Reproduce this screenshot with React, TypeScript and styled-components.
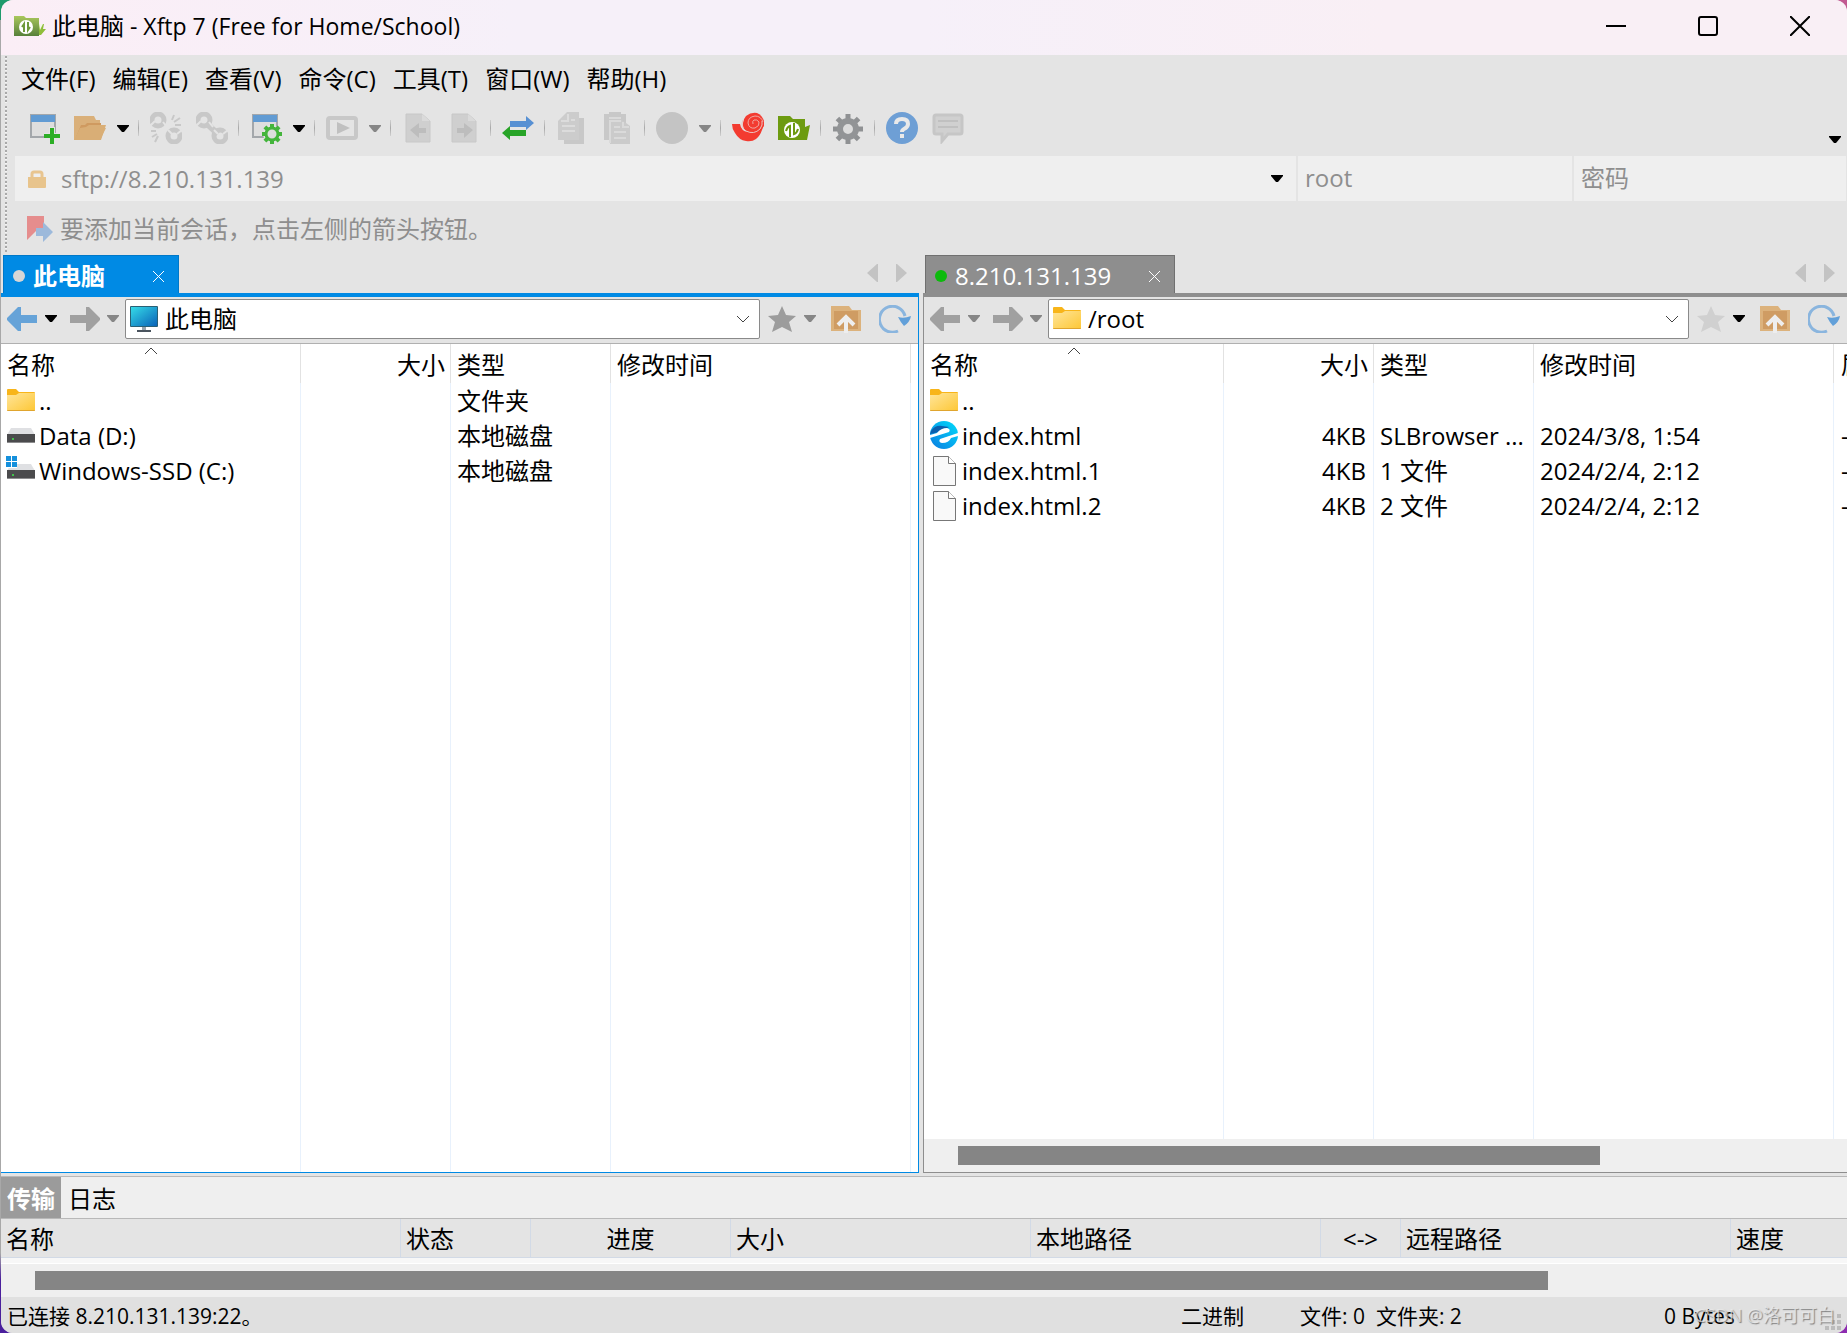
import React from "react";
import styled, { createGlobalStyle } from "styled-components";

const GlobalStyle = createGlobalStyle`
  *, *::before, *::after { box-sizing: border-box; }
  body { margin: 0; }
  body, button, input, select, table {
    font-family: "Open Sans", "Noto Sans CJK SC", sans-serif;
    font-size: 24px;
    line-height: 32px;
    font-weight: 400;
    color: #000;
  }
  button, input, select { margin: 0; padding: 0; border: 0; background: none; outline: none; border-radius: 0; }
  svg { display: block; flex: none; }
`;

/* ---------- Window frame ---------- */

const Desktop = styled.div`
  height: 100vh;
  padding-left: 1px;
  background: linear-gradient(90deg, transparent 50%, #c25a92 50%) top / 100% 20px no-repeat,
    linear-gradient(90deg, transparent 50%, #8d2bb0 50%) bottom / 100% 20px no-repeat,
    linear-gradient(#1f9a6c 0 20px, #a8a8a8 20px 94%, #4a1f9c 96%);
`;

const Frame = styled.div`
  height: 100%;
  display: flex;
  flex-direction: column;
  border-radius: 12px;
  overflow: hidden;
  background: #e4e4e4;
`;

const TitleBar = styled.header`
  flex: none;
  height: 55px;
  display: flex;
  align-items: center;
  padding-left: 13px;
  padding-bottom: 3px;
  background: linear-gradient(90deg, #fbeef6 0, #f6f0f9 28%, #f6f0f9 50%, #f9eff5 75%);
`;

const Title = styled.h1`
  flex: 1;
  margin: 0;
  padding-left: 6px;
  font-size: 24px;
  line-height: 32px;
  font-weight: 400;
`;

const AppName = styled.span`
  font-size: 23px;
`;

const CaptionButton = styled.button`
  width: 92px;
  height: 52px;
  padding-right: 2px;
  display: grid;
  place-items: center;
`;

/* ---------- Bars ---------- */

const Bar = styled.div<{ $height: number }>`
  flex: none;
  height: ${(p) => p.$height}px;
  display: flex;
  align-items: stretch;
`;

const Grip = styled.i`
  flex: none;
  width: 2px;
  margin: 1px 6px 1px 4px;
  background: repeating-linear-gradient(#a9a9a9 0 2px, #f4f4f4 2px 3px, #e4e4e4 3px 4px);
`;

const Menu = styled.nav`
  display: flex;
  align-items: center;
  padding-bottom: 2px;
`;

const MenuItem = styled.button`
  padding: 0 9px 0 8px;
`;

const Tools = styled.div`
  flex: 1;
  display: flex;
  align-items: center;
  padding: 0 6px 5px 8px;
`;

const ToolButton = styled.button`
  width: 46px;
  height: 40px;
  display: grid;
  place-items: center;
`;

const DropButton = styled.button`
  width: 22px;
  height: 40px;
  padding-left: 4px;
  display: flex;
  align-items: center;
`;

const Separator = styled.i`
  width: 8px;
  height: 16px;
  background: linear-gradient(#d0d0d0, #a8a8a8, #d0d0d0) 3px 0 / 1px 100% no-repeat;
`;

const Overflow = styled.button`
  margin: 22px 0 0 auto;
`;

const AddressFields = styled.div`
  flex: 1;
  display: grid;
  grid-template-columns: 1281fr 274fr 272fr;
  gap: 2px;
  margin: 0 1px 0 2px;
`;

const Field = styled.label`
  display: flex;
  align-items: center;
  min-width: 0;
  padding: 0 7px 1px;
  background: #efefef;
`;

const LockField = styled(Field)`
  padding: 0 13px 0;
  gap: 15px;
`;

const FieldInput = styled.input`
  flex: 1;
  min-width: 0;
  color: #8e8e8e;
  &::placeholder { color: #8e8e8e; opacity: 1; }
`;

const Hint = styled.div`
  display: flex;
  align-items: center;
  gap: 7px;
  padding-left: 14px;
  padding-top: 4px;
  color: #8e8e8e;
`;

/* ---------- Panes ---------- */

const Panes = styled.main`
  flex: 1;
  min-height: 0;
  display: grid;
  grid-template-columns: minmax(0, 918fr) minmax(0, 924fr);
  column-gap: 4px;
`;

const Pane = styled.section`
  display: flex;
  flex-direction: column;
  min-height: 0;
`;

const TabStrip = styled.div`
  flex: none;
  height: 40px;
  display: flex;
  align-items: flex-end;
  justify-content: space-between;
  padding: 0 12px 0 2px;
`;

const Tab = styled.div<{ $active: boolean; $width: number }>`
  width: ${(p) => p.$width}px;
  height: 38px;
  display: flex;
  align-items: center;
  padding: 3px 14px 0 9px;
  color: #fff;
  background: ${(p) => (p.$active ? "#008ae4" : "#8e8e8e")};
  border: 1px solid ${(p) => (p.$active ? "#0078c8" : "#707070")};
  border-bottom: 0;
`;

const Dot = styled.i<{ $color: string }>`
  width: 12px;
  height: 12px;
  border-radius: 50%;
  background: ${(p) => p.$color};
`;

const TabLabel = styled.button<{ $bold: boolean }>`
  flex: 1;
  padding-left: 8px;
  text-align: left;
  color: #fff;
  font-weight: ${(p) => (p.$bold ? 700 : 400)};
`;

const TabArrows = styled.div`
  display: flex;
  gap: 18px;
  padding-bottom: 11px;
  button { height: 18px; line-height: 0; }
`;

const PaneBody = styled.div<{ $active: boolean }>`
  flex: 1;
  min-height: 0;
  display: flex;
  flex-direction: column;
  border: solid ${(p) => (p.$active ? "#008ae4" : "#8e8e8e")};
  border-width: ${(p) => (p.$active ? "4px 1px 1px 0" : "4px 0 1px 1px")};
`;

const PathBar = styled.div`
  flex: none;
  height: 47px;
  display: flex;
  align-items: center;
  padding: 0 7px 3px 6px;
  border-bottom: 1px solid #b0b0b0;
`;

const NavButton = styled.button<{ $width: number }>`
  width: ${(p) => p.$width}px;
  height: 40px;
  display: flex;
  align-items: center;
`;

const Combo = styled.label`
  flex: 1;
  min-width: 0;
  height: 40px;
  display: flex;
  align-items: center;
  gap: 7px;
  margin-right: 8px;
  padding: 0 9px 0 4px;
  background: #fff;
  border: 1px solid #8a8a8a;
  border-radius: 2px;
`;

const ComboSelect = styled.select`
  flex: 1;
  min-width: 0;
  appearance: none;
`;

const ListArea = styled.div`
  flex: 1;
  min-height: 0;
  overflow: hidden;
  background: #fff;
`;

const FileTable = styled.table`
  width: 100%;
  height: 100%;
  table-layout: fixed;
  border-collapse: separate;
  border-spacing: 0;
  th, td {
    height: 35px;
    padding: 0 5px 0 6px;
    text-align: left;
    white-space: nowrap;
    overflow: hidden;
    font-weight: 400;
    border-right: 1px solid #e8f1fc;
  }
  th { position: relative; height: 39px; border-right-color: #e2e2e2; padding-top: 2px; }
  th:nth-child(2), td:nth-child(2) { text-align: right; }
  td:nth-child(2) { padding-right: 7px; }
  th:last-child, td:last-child { border-right: 0; padding-left: 7px; padding-right: 0; }
  tr:last-child td { height: auto; }
`;

const SortMark = styled.span`
  position: absolute;
  top: 3px;
  left: 50%;
  margin-left: -7px;
`;

const FileName = styled.span`
  display: flex;
  align-items: center;
  gap: 4px;
  height: 35px;
`;

const ScrollTrack = styled.div<{ $start: number; $thumb: number; $end: number }>`
  flex: none;
  height: 33px;
  padding: 7px 0;
  display: grid;
  grid-template-columns: ${(p) => `${p.$start}fr ${p.$thumb}fr ${p.$end}fr`};
  background: #efefef;
`;

const Thumb = styled.i`
  grid-column: 2;
  background: #858585;
`;

/* ---------- Transfer panel ---------- */

const Transfer = styled.section`
  flex: none;
  margin-top: 3px;
  border-top: 1px solid #b8b8b8;
`;

const TransferTabs = styled.div`
  height: 42px;
  display: flex;
  background: #efefef;
  border-bottom: 1px solid #b8b8b8;
`;

const TransferTab = styled.button<{ $active?: boolean }>`
  padding: 2px 6px 0;
  margin-right: 1px;
  ${(p) => p.$active && "background: #9b9b9b; color: #fff; font-weight: 700;"}
`;

const TransferTable = styled.table`
  width: 100%;
  table-layout: fixed;
  border-collapse: separate;
  border-spacing: 0;
  th {
    height: 39px;
    padding: 2px 5px 0;
    text-align: left;
    font-weight: 400;
    border-right: 1px solid #d2dae6;
    border-bottom: 1px solid #d2dae6;
  }
  th:last-child { border-right: 0; }
  th:nth-child(3), th:nth-child(6) { text-align: center; }
`;

const EmptyRows = styled.div`
  height: 6px;
  background: #f7f7f7;
  border-bottom: 1px solid #fff;
`;

const StatusBar = styled.footer`
  flex: none;
  position: relative;
  height: 36px;
  display: grid;
  grid-template-columns: 1fr 119px 364px 183px;
  align-items: center;
  padding-left: 6px;
  padding-top: 1px;
  background: #e0e0e0;
  font-size: 21px;
  line-height: 28px;
  white-space: pre;
`;

const Watermark = styled.span`
  position: absolute;
  right: 12px;
  top: 4px;
  font-size: 18px;
  line-height: 28px;
  color: rgba(238, 238, 238, 0.7);
  text-shadow: 1px 1px 1px rgba(90, 90, 90, 0.7);
`;

const SizeGrip = styled.svg`
  position: absolute;
  right: 6px;
  bottom: 3px;
`;

/* ---------- Icons ---------- */

const Drop = ({ dim = false }: { dim?: boolean }) => (
  <svg width="12" height="7" viewBox="0 0 12 7">
    <path d="M0 0h12v1L7 7H5L0 1z" fill={dim ? "#868686" : "#000"} />
  </svg>
);

const Tool = ({ children }: { children: React.ReactNode }) => (
  <svg width="32" height="32" viewBox="0 0 32 32">{children}</svg>
);

const Teeth = ({ cx, cy, r, w, h, fill }: { cx: number; cy: number; r: number; w: number; h: number; fill: string }) => (
  <g fill={fill}>
    {[0, 45, 90, 135, 180, 225, 270, 315].map((a) => (
      <rect key={a} x={cx - w / 2} y={cy - r} width={w} height={h} transform={`rotate(${a} ${cx} ${cy})`} />
    ))}
  </g>
);

const WindowShape = () => (
  <>
    <rect x="3" y="3" width="24" height="22" fill="#dedede" stroke="#a3a7ab" strokeWidth="2" />
    <rect x="3" y="3" width="24" height="7" fill="#619bd3" />
  </>
);

const NewSession = () => (
  <Tool>
    <WindowShape />
    <path d="M24 15v16M16 24h16" stroke="#e4e4e4" strokeWidth="6" />
    <path d="M24 16v16M16 24h16" stroke="#2cae25" strokeWidth="4" />
  </Tool>
);

const OpenFolder = () => (
  <Tool>
    <path d="M0 4h20l2 4h4v8h6l-6 12H0z" fill="#dab07a" />
    <path d="M2 25l5-12h4l2-2h14v4h-2" fill="#cf9a60" />
    <path d="M0 28l6-12 6-1 3-2h17l-5 15z" fill="#d9ae76" />
  </Tool>
);

const Chain = ({ broken = false }: { broken?: boolean }) => (
  <Tool>
    <g fill="none" stroke="#c8c8c8" strokeWidth="5">
      <circle cx="8" cy="8" r="6" />
      <circle cx="24" cy="24" r="6" />
      {broken ? (
        <path d="M22 8l2-5M24 10l6-4M25 13h6M8 24l-3 6M7 22l-5 3M6 19H1" strokeWidth="2" />
      ) : (
        <path d="M10 11l12 11" strokeWidth="6" />
      )}
    </g>
    <path d="M5 9l-5 5M13 10l4 5M18 18l4 4M27 22l5-4" stroke="#e4e4e4" strokeWidth="2" />
  </Tool>
);

const SessionSettings = () => (
  <Tool>
    <WindowShape />
    <circle cx="22" cy="22" r="9" fill="#e4e4e4" />
    <Teeth cx={22} cy={22} r={10} w={4} h={5} fill="#44b53c" />
    <circle cx="22" cy="22" r="6" fill="#dedede" stroke="#44b53c" strokeWidth="3" />
  </Tool>
);

const Play = () => (
  <Tool>
    <rect x="2" y="6" width="28" height="20" rx="2" fill="none" stroke="#c8c8c8" strokeWidth="4" />
    <path d="M11 10l13 6-13 6z" fill="#c0c0c0" />
  </Tool>
);

const DocArrow = ({ left = false }: { left?: boolean }) => (
  <Tool>
    <path d="M4 2h16l8 7v21H4z" fill="#cfcfcf" stroke="#c8c8c8" />
    <path d="M20 2v7h8" fill="#dadada" />
    <path d={left ? "M8 18l9-7v5h7v5h-7v5z" : "M25 18l-9-7v5H9v5h7v5z"} fill="#bdbdbd" />
  </Tool>
);

const Swap = () => (
  <Tool>
    <path d="M8 9h16V4l8 7-8 7v-3H8z" fill="#5790d3" />
    <path d="M24 18H8v-4l-8 7 8 7v-4h16z" fill="#28a428" />
  </Tool>
);

const CopyIcon = () => (
  <Tool>
    <path d="M8 6h20v26H8z" fill="#c8c8c8" />
    <path d="M2 9l9-9h12v28H2z" fill="#cccccc" />
    <path d="M12 2v7H5M6 14h13M6 19h13M15 8h4" fill="none" stroke="#dcdcdc" strokeWidth="2" />
  </Tool>
);

const PasteIcon = () => (
  <Tool>
    <path d="M2 2h5V0h12v2h5v26H2z" fill="#c8c8c8" />
    <path d="M7 6h12" stroke="#dadada" strokeWidth="2" />
    <path d="M8 8h12l8 6v18H8z" fill="#cbcbcb" />
    <path d="M8 31V9h11M12 15h6M12 20h12M12 26h12M21 10v5h6" fill="none" stroke="#dadada" strokeWidth="2" />
  </Tool>
);

const Disc = () => (
  <Tool>
    <circle cx="16" cy="16" r="16" fill="#c4c4c4" />
  </Tool>
);

const Swirl = () => (
  <Tool>
    <path d="M0 12h8q1 7 8 8h8q5-3 7-9 1 4-1 7-2 6-6 9-4 3-10 2-7-1-11-8Q0 17 0 12z" fill="#f33b30" />
    <path d="M14 4q5-4 11-3 5 2 7 8v5l-5 6H15q-5-4-4-9 1-5 3-7z" fill="#f33b30" />
    <path d="M11 8q-3 7 3 11 8 4 14-2 3-4 2-8" fill="none" stroke="#ecc4c1" strokeWidth="1" />
    <path
      d="M31 10q-2-6-8-6-7 1-7 7 1 6 7 5 5-2 4-6-2-3-5-2-2 1-1 4"
      fill="none"
      stroke="#f0a8a2"
      strokeWidth="1"
    />
  </Tool>
);

const XftpFolder = () => (
  <Tool>
    <path d="M0 4h12l3 3h12v8l5-2-3 15H0z" fill="#6d9b10" />
    <circle cx="14" cy="18" r="8" fill="#fff" />
    <path d="M12 25V14q-3 1-4 5M16 11v11q3-1 4-5" fill="none" stroke="#6d9b10" strokeWidth="2" />
  </Tool>
);

const GearIcon = () => (
  <Tool>
    <Teeth cx={16} cy={17} r={15} w={5} h={7} fill="#8f9193" />
    <circle cx="16" cy="17" r="8" fill="#dcdcdc" stroke="#929496" strokeWidth="6" />
  </Tool>
);

const HelpIcon = () => (
  <Tool>
    <circle cx="16" cy="16" r="16" fill="#6e9fd5" />
    <path d="M10 12q0-5 6-5t6 5q0 3-4 5-2 1-2 3" fill="none" stroke="#e9e9e9" strokeWidth="4" />
    <rect x="14" y="22" width="4" height="4" fill="#e9e9e9" />
  </Tool>
);

const ChatIcon = () => (
  <Tool>
    <path d="M4 3h24q2 0 2 2v15q0 2-2 2H16l-6 7v-7H4q-2 0-2-2V5q0-2 2-2z" fill="#d0d0d0" stroke="#c6c6c6" strokeWidth="3" />
    <path d="M6 9h20M6 15h20" stroke="#c0c0c0" strokeWidth="2" />
  </Tool>
);

const AppIcon = () => (
  <svg width="32" height="22" viewBox="0 0 32 22">
    <defs>
      <linearGradient id="app-green" x1="0" y1="0" x2="0" y2="1">
        <stop offset="0" stopColor="#a9c75c" />
        <stop offset="1" stopColor="#57803a" />
      </linearGradient>
    </defs>
    <path d="M0 1h10l2 2h13v18H0z" fill="url(#app-green)" />
    <path d="M25 9h5l-1 5h3l-5 6h-2z" fill="#8fbd3a" />
    <path d="M25 9h4l-3 6z" fill="#f3f7e8" />
    <circle cx="12" cy="12" r="7" fill="#fff" />
    <path d="M10 17V9l-2 3M14 7v8l2-3" fill="none" stroke="#6f9a3c" strokeWidth="2" />
  </svg>
);

const LockIcon = () => (
  <svg width="18" height="18" viewBox="0 0 18 18">
    <path d="M4 8V4q0-2 2-2h6q2 0 2 2v4" fill="none" stroke="#e8c590" strokeWidth="3" />
    <path d="M0 7h18v10q0 1-1 1H1q-1 0-1-1z" fill="#e8c48c" />
  </svg>
);

const BookmarkIcon = () => (
  <svg width="26" height="27" viewBox="0 0 26 27">
    <path d="M0 0h17v15H9L0 24z" fill="#e58d8d" />
    <path d="M9 12h7V6l10 10-10 10v-6H9z" fill="#9cb9db" />
  </svg>
);

const NavArrow = ({ right = false, color = "#a0a0a0" }: { right?: boolean; color?: string }) => (
  <svg width="30" height="24" viewBox="0 0 30 24">
    <path d={right ? "M0 8h16V0h3l11 11v2L19 24h-3v-8H0z" : "M30 8H14V0h-3L0 11v2l11 11h3v-8h16z"} fill={color} />
  </svg>
);

const Star = ({ color }: { color: string }) => (
  <svg width="28" height="26" viewBox="0 0 28 26">
    <path d="M14 0l4 9 10 1-7 6 3 10-10-5-10 5 3-10-7-6 10-1z" fill={color} />
  </svg>
);

const UpFolder = () => (
  <svg width="30" height="28" viewBox="0 0 30 28">
    <path d="M0 1h18l3 4h9v21H0z" fill="#dcb27c" />
    <path d="M3 6h24v18H3z" fill="#cf9c63" />
    <path d="M15 28V13M7 20l8-8 8 8" fill="none" stroke="#eeeeee" strokeWidth="4" />
  </svg>
);

const Refresh = () => (
  <svg width="32" height="28" viewBox="0 0 32 28">
    <path d="M19 26A13 13 0 1 1 26 11" fill="none" stroke="#8ab5de" strokeWidth="3" />
    <path d="M19 12q6 2 13-1-1 6-7 10-3-3-6-9z" fill="#62a0d9" />
  </svg>
);

const Chevron = ({ up = false }: { up?: boolean }) => (
  <svg width="14" height="8" viewBox="0 0 14 8">
    <path d={up ? "M1 7l6-6 6 6" : "M1 1l6 6 6-6"} fill="none" stroke="#444" />
  </svg>
);

const SideArrow = ({ right = false }: { right?: boolean }) => (
  <svg width="11" height="18" viewBox="0 0 11 18">
    <path d={right ? "M0 0h1l10 9-10 9H0z" : "M11 0h-1L0 9l10 9h1z"} fill="#c3c3c3" />
  </svg>
);

const CloseMark = () => (
  <svg width="11" height="11" viewBox="0 0 11 11">
    <path d="M0 0l11 11M11 0L0 11" stroke="#fff" />
  </svg>
);

const MonitorIcon = () => (
  <svg width="28" height="26" viewBox="0 0 28 26">
    <defs>
      <linearGradient id="screen" x1="0" y1="0" x2="1" y2="1">
        <stop offset="0" stopColor="#35dbe8" />
        <stop offset="1" stopColor="#0a63b8" />
      </linearGradient>
    </defs>
    <rect x="0" y="0" width="28" height="21" rx="1" fill="#2a6075" />
    <rect x="1" y="1" width="26" height="19" fill="url(#screen)" />
    <path d="M12 21h4v3h-4z" fill="#98a4ae" />
    <path d="M7 24h14v2H7z" fill="#4a545e" />
  </svg>
);

const FolderIcon = () => (
  <svg width="28" height="24" viewBox="0 0 28 24">
    <defs>
      <linearGradient id="folder" x1="0" y1="0" x2="1" y2="1">
        <stop offset="0" stopColor="#ffe59a" />
        <stop offset="1" stopColor="#fdc735" />
      </linearGradient>
    </defs>
    <path d="M0 1q0-1 1-1h8l3 3h15q1 0 1 1v4H0z" fill="#f8b51a" />
    <path d="M0 6h9l3-2h16v17q0 1-1 1H1q-1 0-1-1z" fill="url(#folder)" />
    <path d="M0 21q0 1 1 1h26q1 0 1-1z" fill="#e0a52e" />
  </svg>
);

const DriveIcon = ({ system = false }: { system?: boolean }) => (
  <svg width="28" height={system ? 34 : 18} viewBox={system ? "0 -10 28 34" : "0 -1 28 18"} overflow="visible">
    <path d="M4 0h20l4 7H0z" fill="#dfe0e3" />
    <path d="M0 6h28v9H0z" fill="#4b4b4d" />
    <path d="M0 14h28v1H0z" fill="#8c8c8e" />
    <circle cx="6" cy="11" r="1" fill="#3bea4a" />
    {system && (
      <g fill="#1590dc">
        <path d="M-2-8h12V4H-2z" fill="#fff" />
        <path d="M-1-8h5v5h-5zM5-8h5v5H5zM-1-2h5v5h-5zM5-2h5v5H5z" />
      </g>
    )}
  </svg>
);

const BrowserIcon = () => (
  <svg width="28" height="30" viewBox="0 0 28 30">
    <defs>
      <linearGradient id="browser" x1="0" y1="1" x2="1" y2="0">
        <stop offset="0" stopColor="#0b7be0" />
        <stop offset="1" stopColor="#00dcfb" />
      </linearGradient>
    </defs>
    <circle cx="14" cy="14" r="14" fill="url(#browser)" />
    <path d="M1 10Q5 4 12 5l7 1-6 3-8 3-5 1z" fill="#0b5fae" />
    <path d="M0 14l7-2q4-5 10-5 4 1 2 4L0 17zM28 12l-18 6q-2 3 2 4 7 0 9-5l7-2z" fill="#fff" />
  </svg>
);

const PageIcon = () => (
  <svg width="28" height="30" viewBox="0 0 28 30">
    <path d="M3.500 .5h15l7 7v22h-22z" fill="#f9f9f9" stroke="#777" />
    <path d="M18.500 .5v7h7" fill="#fff" stroke="#777" />
  </svg>
);

/* ---------- Data ---------- */

type Row = { icon: React.ReactNode; name: string; size?: string; type?: string; modified?: string; attr?: string };

const localRows: Row[] = [
  { icon: <FolderIcon />, name: "..", type: "文件夹" },
  { icon: <DriveIcon />, name: "Data (D:)", type: "本地磁盘" },
  { icon: <DriveIcon system />, name: "Windows-SSD (C:)", type: "本地磁盘" },
];

const remoteRows: Row[] = [
  { icon: <FolderIcon />, name: ".." },
  { icon: <BrowserIcon />, name: "index.html", size: "4KB", type: "SLBrowser ...", modified: "2024/3/8, 1:54", attr: "-" },
  { icon: <PageIcon />, name: "index.html.1", size: "4KB", type: "1 文件", modified: "2024/2/4, 2:12", attr: "-" },
  { icon: <PageIcon />, name: "index.html.2", size: "4KB", type: "2 文件", modified: "2024/2/4, 2:12", attr: "-" },
];

const menus = ["文件(F)", "编辑(E)", "查看(V)", "命令(C)", "工具(T)", "窗口(W)", "帮助(H)"];

type ToolItem = "|" | { label: string; icon: React.ReactNode; drop?: "on" | "dim" };

const tools: ToolItem[] = [
  { label: "新建", icon: <NewSession /> },
  { label: "打开", icon: <OpenFolder />, drop: "on" },
  "|",
  { label: "断开", icon: <Chain broken /> },
  { label: "重新连接", icon: <Chain /> },
  "|",
  { label: "属性", icon: <SessionSettings />, drop: "on" },
  "|",
  { label: "运行", icon: <Play />, drop: "dim" },
  "|",
  { label: "向左传输", icon: <DocArrow left /> },
  { label: "向右传输", icon: <DocArrow /> },
  "|",
  { label: "同步", icon: <Swap /> },
  "|",
  { label: "复制", icon: <CopyIcon /> },
  { label: "粘贴", icon: <PasteIcon /> },
  "|",
  { label: "编码", icon: <Disc />, drop: "dim" },
  "|",
  { label: "Xshell", icon: <Swirl /> },
  { label: "Xftp", icon: <XftpFolder /> },
  "|",
  { label: "选项", icon: <GearIcon /> },
  "|",
  { label: "帮助", icon: <HelpIcon /> },
  { label: "反馈", icon: <ChatIcon /> },
];

const transferColumns: [string, number | undefined][] = [
  ["名称", 400],
  ["状态", 130],
  ["进度", 200],
  ["大小", 300],
  ["本地路径", 290],
  ["<->", 80],
  ["远程路径", 330],
  ["速度", undefined],
];

/* ---------- Composite parts ---------- */

type FilePaneProps = {
  active: boolean;
  tab: string;
  tabWidth: number;
  dot: string;
  path: string;
  pathIcon: React.ReactNode;
  rows: Row[];
  attrTitle?: string;
  scroll?: boolean;
};

function FilePane({ active, tab, tabWidth, dot, path, pathIcon, rows, attrTitle, scroll }: FilePaneProps) {
  return (
    <Pane>
      <TabStrip>
        <Tab $active={active} $width={tabWidth}>
          <Dot $color={dot} />
          <TabLabel $bold={active}>{tab}</TabLabel>
          <button aria-label="关闭标签"><CloseMark /></button>
        </Tab>
        <TabArrows>
          <button aria-label="上一个标签"><SideArrow /></button>
          <button aria-label="下一个标签"><SideArrow right /></button>
        </TabArrows>
      </TabStrip>
      <PaneBody $active={active}>
        <PathBar>
          <NavButton $width={38} aria-label="后退"><NavArrow color={active ? "#66a3d8" : "#a0a0a0"} /></NavButton>
          <NavButton $width={25} aria-label="后退历史"><Drop dim={!active} /></NavButton>
          <NavButton $width={37} aria-label="前进"><NavArrow right /></NavButton>
          <NavButton $width={18} aria-label="前进历史"><Drop dim /></NavButton>
          <Combo>
            {pathIcon}
            <ComboSelect aria-label="路径" defaultValue={path}>
              <option>{path}</option>
            </ComboSelect>
            <Chevron />
          </Combo>
          <NavButton $width={36} aria-label="收藏"><Star color={active ? "#9c9c9c" : "#d0d0d0"} /></NavButton>
          <NavButton $width={27} aria-label="收藏列表"><Drop dim={active} /></NavButton>
          <NavButton $width={48} aria-label="上级目录"><UpFolder /></NavButton>
          <NavButton $width={32} aria-label="刷新"><Refresh /></NavButton>
        </PathBar>
        <ListArea>
          <FileTable>
            <colgroup>
              <col width={300} />
              <col width={150} />
              <col width={160} />
              <col width={300} />
              <col />
            </colgroup>
            <thead>
              <tr>
                <th>
                  名称
                  <SortMark><Chevron up /></SortMark>
                </th>
                <th>大小</th>
                <th>类型</th>
                <th>修改时间</th>
                <th>{attrTitle}</th>
              </tr>
            </thead>
            <tbody>
              {rows.map((r) => (
                <tr key={r.name}>
                  <td><FileName>{r.icon}{r.name}</FileName></td>
                  <td>{r.size}</td>
                  <td>{r.type}</td>
                  <td>{r.modified}</td>
                  <td>{r.attr}</td>
                </tr>
              ))}
              <tr><td /><td /><td /><td /><td /></tr>
            </tbody>
          </FileTable>
        </ListArea>
        {scroll && <ScrollTrack $start={34} $thumb={642} $end={247}><Thumb /></ScrollTrack>}
      </PaneBody>
    </Pane>
  );
}

export default function App() {
  return (
    <Desktop>
      <GlobalStyle />
      <Frame>
        <TitleBar>
          <AppIcon />
          <Title>此电脑<AppName> - Xftp 7 (Free for Home/School)</AppName></Title>
          <CaptionButton aria-label="最小化">
            <svg width="20" height="20" viewBox="0 0 20 20"><path d="M0 10h20" stroke="#000" strokeWidth="2" /></svg>
          </CaptionButton>
          <CaptionButton aria-label="最大化">
            <svg width="20" height="20" viewBox="0 0 20 20">
              <rect x="1" y="1" width="18" height="18" rx="2" fill="none" stroke="#000" strokeWidth="2" />
            </svg>
          </CaptionButton>
          <CaptionButton aria-label="关闭">
            <svg width="20" height="20" viewBox="0 0 20 20">
              <path d="M0 0l20 20M20 0L0 20" stroke="#000" strokeWidth="2" />
            </svg>
          </CaptionButton>
        </TitleBar>

        <Bar $height={50}>
          <Grip />
          <Menu>
            {menus.map((m) => <MenuItem key={m}>{m}</MenuItem>)}
          </Menu>
        </Bar>

        <Bar $height={51}>
          <Grip />
          <Tools>
            {tools.map((t, i) =>
              t === "|" ? (
                <Separator key={i} />
              ) : (
                <React.Fragment key={i}>
                  <ToolButton aria-label={t.label}>{t.icon}</ToolButton>
                  {t.drop && (
                    <DropButton aria-label={`${t.label}菜单`}><Drop dim={t.drop === "dim"} /></DropButton>
                  )}
                </React.Fragment>
              )
            )}
            <Overflow aria-label="更多"><Drop /></Overflow>
          </Tools>
        </Bar>

        <Bar $height={45}>
          <Grip />
          <AddressFields>
            <LockField>
              <LockIcon />
              <FieldInput aria-label="地址" defaultValue="sftp://8.210.131.139" />
              <button aria-label="地址历史"><Drop /></button>
            </LockField>
            <Field><FieldInput aria-label="用户名" defaultValue="root" /></Field>
            <Field><FieldInput aria-label="密码" type="password" placeholder="密码" /></Field>
          </AddressFields>
        </Bar>

        <Bar $height={52}>
          <Grip />
          <Hint><BookmarkIcon />要添加当前会话，点击左侧的箭头按钮。</Hint>
        </Bar>

        <Panes>
          <FilePane active tab="此电脑" tabWidth={176} dot="#d6d6d6" path="此电脑" pathIcon={<MonitorIcon />} rows={localRows} />
          <FilePane
            active={false}
            tab="8.210.131.139"
            tabWidth={250}
            dot="#0cba0c"
            path="/root"
            pathIcon={<FolderIcon />}
            rows={remoteRows}
            attrTitle="属性"
            scroll
          />
        </Panes>

        <Transfer>
          <TransferTabs>
            <TransferTab $active>传输</TransferTab>
            <TransferTab>日志</TransferTab>
          </TransferTabs>
          <TransferTable>
            <colgroup>
              {transferColumns.map(([name, width]) => <col key={name} width={width} />)}
            </colgroup>
            <thead>
              <tr>{transferColumns.map(([name]) => <th key={name}>{name}</th>)}</tr>
            </thead>
          </TransferTable>
          <EmptyRows />
          <ScrollTrack $start={34} $thumb={1513} $end={299}><Thumb /></ScrollTrack>
        </Transfer>

        <StatusBar>
          <span>已连接 8.210.131.139:22。</span>
          <span>二进制</span>
          <span>文件: 0  文件夹: 2</span>
          <span>0 Bytes</span>
          <SizeGrip width="16" height="16" viewBox="0 0 16 16">
            <path d="M12 0h4v4h-4zM6 6h4v4H6zM12 6h4v4h-4zM0 12h4v4H0zM6 12h4v4H6zM12 12h4v4h-4z" fill="#bcbcbc" />
          </SizeGrip>
          <Watermark>CSDN @洛可可白</Watermark>
        </StatusBar>
      </Frame>
    </Desktop>
  );
}
